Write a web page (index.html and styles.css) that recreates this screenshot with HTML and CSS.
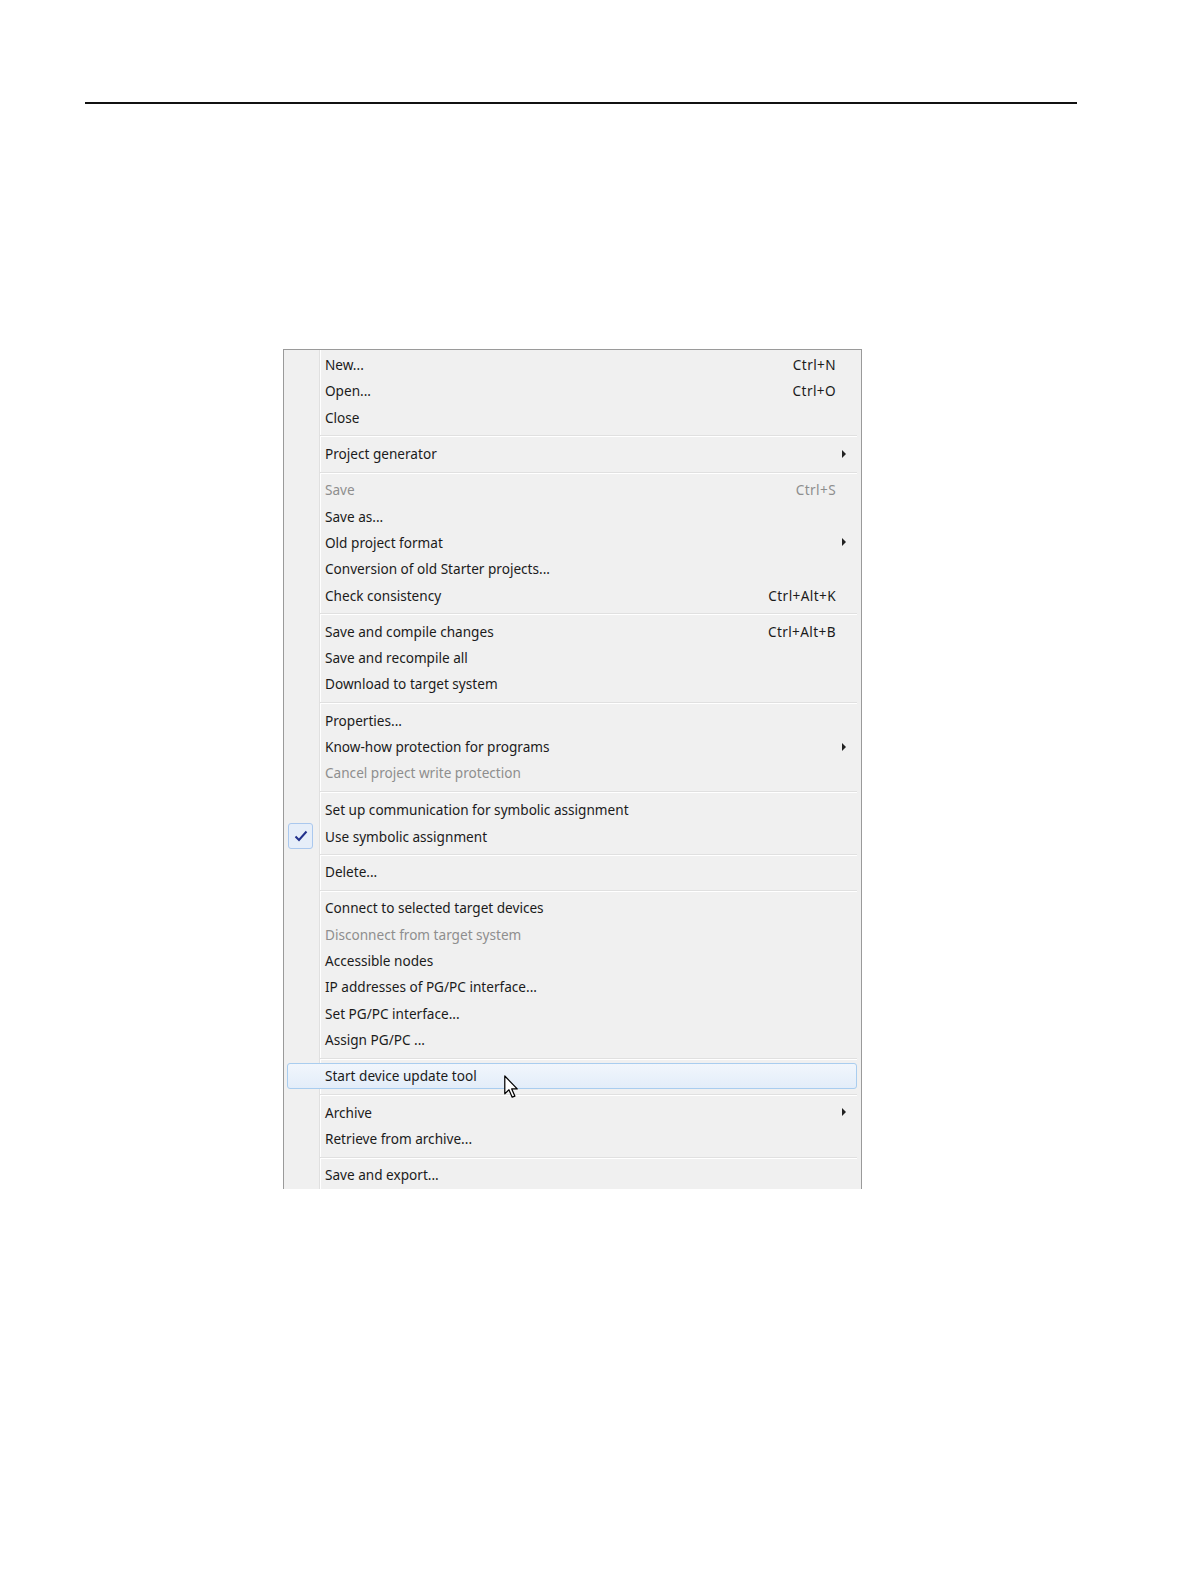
FILE: index.html
```html
<!DOCTYPE html>
<html lang="en">
<head>
    <meta charset="UTF-8">
    <title>Project menu</title>
    <link rel="stylesheet" href="styles.css">
</head>
<body>

    <div class="rule"></div>

    <!-- Project menu -->
    <div class="menu">
        <div class="item"><span class="label">New...</span><span class="key">Ctrl+N</span></div>
        <div class="item"><span class="label">Open...</span><span class="key">Ctrl+O</span></div>
        <div class="item"><span class="label">Close</span></div>
        <div class="sep"></div>
        <div class="item"><span class="label">Project generator</span><span class="sub"></span></div>
        <div class="sep"></div>
        <div class="item off"><span class="label">Save</span><span class="key">Ctrl+S</span></div>
        <div class="item"><span class="label">Save as...</span></div>
        <div class="item"><span class="label">Old project format</span><span class="sub"></span></div>
        <div class="item"><span class="label">Conversion of old Starter projects...</span></div>
        <div class="item"><span class="label">Check consistency</span><span class="key">Ctrl+Alt+K</span></div>
        <div class="sep"></div>
        <div class="item"><span class="label">Save and compile changes</span><span class="key">Ctrl+Alt+B</span></div>
        <div class="item"><span class="label">Save and recompile all</span></div>
        <div class="item"><span class="label">Download to target system</span></div>
        <div class="sep"></div>
        <div class="item"><span class="label">Properties...</span></div>
        <div class="item"><span class="label">Know-how protection for programs</span><span class="sub"></span></div>
        <div class="item off"><span class="label">Cancel project write protection</span></div>
        <div class="sep"></div>
        <div class="item"><span class="label">Set up communication for symbolic assignment</span></div>
        <div class="item">
            <span class="check">
                <svg width="14" height="12" viewBox="0 0 14 12"><path d="M1.5 6.5 L5 10 L12.5 1.5" fill="none" stroke="#22318c" stroke-width="2"/></svg>
            </span>
            <span class="label">Use symbolic assignment</span>
        </div>
        <div class="sep"></div>
        <div class="item"><span class="label">Delete...</span></div>
        <div class="sep"></div>
        <div class="item"><span class="label">Connect to selected target devices</span></div>
        <div class="item off"><span class="label">Disconnect from target system</span></div>
        <div class="item"><span class="label">Accessible nodes</span></div>
        <div class="item"><span class="label">IP addresses of PG/PC interface...</span></div>
        <div class="item"><span class="label">Set PG/PC interface...</span></div>
        <div class="item"><span class="label">Assign PG/PC ...</span></div>
        <div class="sep"></div>
        <div class="item hover">
            <span class="label">Start device update tool</span>
            <svg class="pointer" width="14" height="24" viewBox="0 0 12.5 21">
                <path d="M0.7 0.7 L0.7 16.6 L4.4 13 L7.3 19.6 L9.7 18.6 L6.9 12.2 L11.8 12.2 Z" fill="#fff" stroke="#000" stroke-width="1.1" stroke-linejoin="round"/>
            </svg>
        </div>
        <div class="sep"></div>
        <div class="item"><span class="label">Archive</span><span class="sub"></span></div>
        <div class="item"><span class="label">Retrieve from archive...</span></div>
        <div class="sep"></div>
        <div class="item"><span class="label">Save and export...</span></div>
    </div>

</body>
</html>
```

FILE: styles.css
```css
body {
    margin: 0;
    padding-top: 102px;
    background: #fff;
    font-family: 'Noto Sans', 'Open Sans', sans-serif;
}
.rule {
    margin-left: 85px;
    width: 992px;
    height: 1.5px;
    background: #111;
}
.menu {
    box-sizing: border-box;
    width: 579px;
    margin: 245px 0 0 283px;
    padding: 2px 4px 1px 3px;
    border: 1px solid #9a9a9a;
    border-bottom: none;
    background:
        linear-gradient(to right, transparent 35px, #e0e0e0 35px, #e0e0e0 36px, #fff 36px, #fff 37px, transparent 37px),
        #f0f0f0;
}
.item {
    position: relative;
    box-sizing: border-box;
    display: grid;
    grid-template-columns: 37px 1fr auto 20px;
    align-items: center;
    height: 26.3px;
    font-size: 13.6px;
    color: #1b1b1b;
    border: 1px solid transparent;
    border-radius: 3px;
}
.item .label {
    grid-column: 2;
}
.item .key {
    grid-column: 3;
    text-align: right;
    letter-spacing: 0.4px;
}
.item .sub {
    grid-column: 4;
    justify-self: start;
    margin-left: 6px;
    width: 0;
    height: 0;
    border-top: 4px solid transparent;
    border-bottom: 4px solid transparent;
    border-left: 4px solid #222;
}
.item.off {
    color: #8e8e8e;
}
.check {
    grid-column: 1;
    box-sizing: border-box;
    width: 25px;
    height: 26px;
    display: flex;
    align-items: center;
    justify-content: center;
    border: 1px solid #aac8ee;
    border-radius: 3px;
    background: #e6eef9;
}
.hover {
    border-color: #a9cdef;
    background: linear-gradient(#f1f6fc, #e3edf9);
}
.pointer {
    position: absolute;
    left: 216px;
    top: 11px;
}
.sep {
    height: 1px;
    margin: 5px 0 3px 33px;
    background: #e0e0e0;
    border-bottom: 1px solid #fff;
}
```
